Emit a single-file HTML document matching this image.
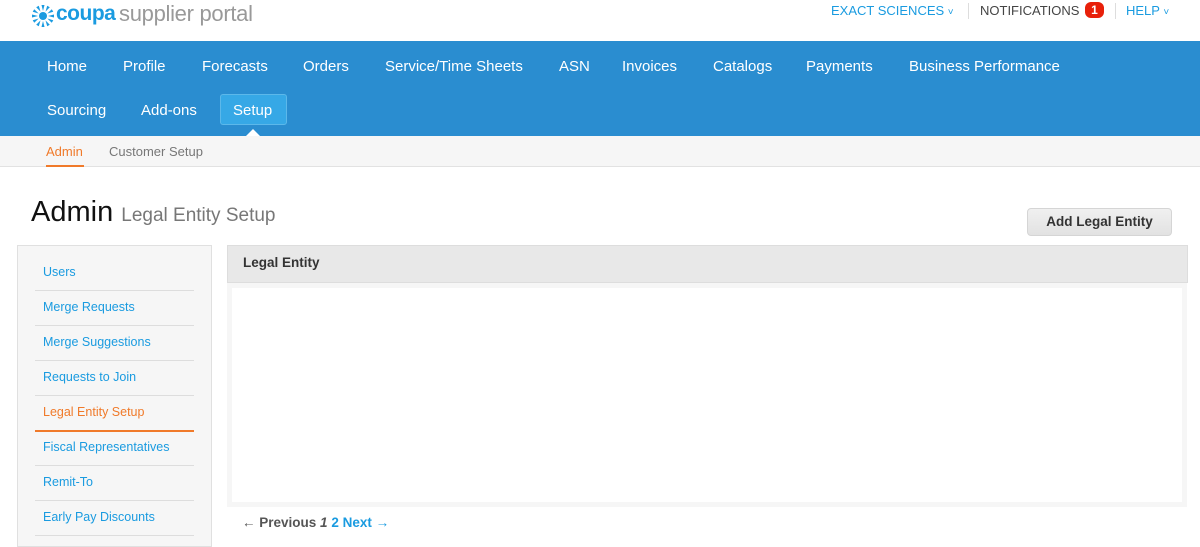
<!DOCTYPE html>
<html><head><meta charset="utf-8"><style>
body{margin:0;width:1200px;height:539px;overflow:hidden;font-family:"Liberation Sans",sans-serif;background:#fff;position:relative}
.a{position:absolute}
.nav span{position:absolute;color:#fff;font-size:15px}
.side a{position:absolute;left:43px;font-size:12.5px;color:#1a9be0;text-decoration:none}
.sep{position:absolute;left:35px;width:159px;height:1px;background:#ddd}
</style></head><body>
<svg class="a" style="left:31px;top:4px" width="24" height="24" viewBox="0 0 24 24"><g fill="#1a9be0"><circle cx="12" cy="12" r="4"/><g id="r"><path d="M10.5 1h3l-1.5 6z"/></g><use href="#r" transform="rotate(30 12 12)"/><use href="#r" transform="rotate(60 12 12)"/><use href="#r" transform="rotate(90 12 12)"/><use href="#r" transform="rotate(120 12 12)"/><use href="#r" transform="rotate(150 12 12)"/><use href="#r" transform="rotate(180 12 12)"/><use href="#r" transform="rotate(210 12 12)"/><use href="#r" transform="rotate(240 12 12)"/><use href="#r" transform="rotate(270 12 12)"/><use href="#r" transform="rotate(300 12 12)"/><use href="#r" transform="rotate(330 12 12)"/></g></svg>
<div class="a" style="left:56px;top:2px;font-size:21px;color:#1a9be0;font-weight:bold;letter-spacing:-0.5px">coupa</div>
<div class="a" style="left:119px;top:1px;font-size:22px;color:#999;letter-spacing:-0.3px">supplier portal</div>
<div class="a" style="left:831px;top:3px;font-size:13px;color:#1a9be0">EXACT SCIENCES <span style="font-size:10px">˅</span></div>
<div class="a" style="left:968px;top:3px;width:1px;height:16px;background:#ddd"></div>
<div class="a" style="left:980px;top:3px;font-size:13px;color:#444">NOTIFICATIONS</div>
<div class="a" style="left:1085px;top:2px;width:19px;height:16px;border-radius:6px;background:#e8200a;color:#fff;font-size:12px;font-weight:bold;text-align:center;line-height:16px">1</div>
<div class="a" style="left:1115px;top:3px;width:1px;height:16px;background:#ddd"></div>
<div class="a" style="left:1126px;top:3px;font-size:13px;color:#1a9be0">HELP <span style="font-size:10px">˅</span></div>
<div class="a nav" style="left:0;top:41px;width:1200px;height:95px;background:#2a8dd0">
<div class="a" style="left:220px;top:53px;width:65px;height:29px;background:#36a8e6;border:1px solid #5cb8ea;border-radius:3px"></div>
<div class="a" style="left:246px;top:88px;width:0;height:0;border:7px solid transparent;border-bottom-color:#fff;border-top:0"></div>
<span style="left:47px;top:17px">Home</span><span style="left:123px;top:17px">Profile</span><span style="left:202px;top:17px">Forecasts</span><span style="left:303px;top:17px">Orders</span><span style="left:385px;top:17px">Service/Time Sheets</span><span style="left:559px;top:17px">ASN</span><span style="left:622px;top:17px">Invoices</span><span style="left:713px;top:17px">Catalogs</span><span style="left:806px;top:17px">Payments</span><span style="left:909px;top:17px">Business Performance</span>
<span style="left:47px;top:61px">Sourcing</span><span style="left:141px;top:61px">Add-ons</span><span style="left:233px;top:61px">Setup</span>
</div>
<div class="a" style="left:0;top:136px;width:1200px;height:30px;background:#f6f6f6;border-bottom:1px solid #e2e2e2"></div>
<div class="a" style="left:46px;top:144px;font-size:13px;color:#f07a2a">Admin</div>
<div class="a" style="left:46px;top:165px;width:38px;height:2px;background:#f07a2a"></div>
<div class="a" style="left:109px;top:144px;font-size:13px;color:#777">Customer Setup</div>
<div class="a" style="left:31px;top:196px;font-size:29px;color:#111">Admin <span style="font-size:19px;color:#777">Legal Entity Setup</span></div>
<div class="a" style="left:1027px;top:208px;width:143px;height:26px;background:linear-gradient(#f0f0f0,#e2e2e2);border:1px solid #d5d5d5;border-radius:4px;font-size:13.5px;font-weight:bold;color:#333;text-align:center;line-height:26px">Add Legal Entity</div>
<div class="a side" style="left:17px;top:245px;width:193px;height:300px;background:#f6f6f6;border:1px solid #e0e0e0"></div>
<div class="side">
<a style="top:265px">Users</a><div class="sep" style="top:290px"></div>
<a style="top:300px">Merge Requests</a><div class="sep" style="top:325px"></div>
<a style="top:335px">Merge Suggestions</a><div class="sep" style="top:360px"></div>
<a style="top:370px">Requests to Join</a><div class="sep" style="top:395px"></div>
<a style="top:405px;color:#f07a2a">Legal Entity Setup</a><div class="sep" style="top:430px;background:#f07a2a;height:2px"></div>
<a style="top:440px">Fiscal Representatives</a><div class="sep" style="top:465px"></div>
<a style="top:475px">Remit-To</a><div class="sep" style="top:500px"></div>
<a style="top:510px">Early Pay Discounts</a><div class="sep" style="top:535px"></div>
</div>
<div class="a" style="left:227px;top:245px;width:959px;height:36px;background:#e8e8e8;border:1px solid #ddd"></div>
<div class="a" style="left:243px;top:255px;font-size:13.5px;font-weight:bold;color:#333">Legal Entity</div>
<div class="a" style="left:227px;top:283px;width:950px;height:214px;border:5px solid #f6f6f6;background:#fff"></div>
<div class="a" style="left:242px;top:515px;font-size:13.5px;font-weight:bold;color:#555">← Previous <i>1</i> <span style="color:#1a9be0">2 Next →</span></div>
</body></html>
